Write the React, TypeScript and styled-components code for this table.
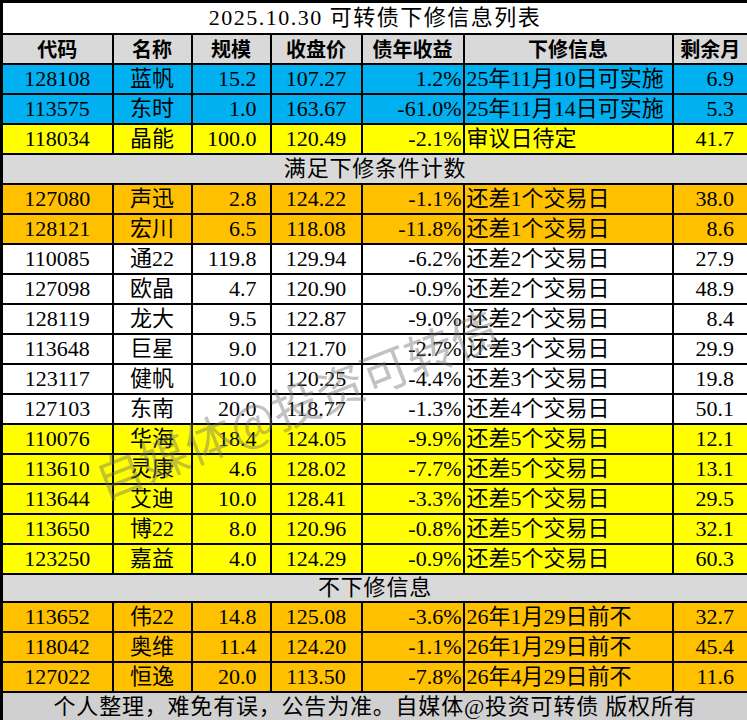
import React from 'react';
import styled, {createGlobalStyle} from 'styled-components';

type Tone = 'blue' | 'yellow' | 'orange' | 'white';

interface Bond {
  code: string;
  name: string;
  size: string;
  price: string;
  yld: string;
  info: string;
  months: string;
  tone: Tone;
}

const tones: Record<Tone, string> = {
  blue: '#00b0f0',
  yellow: '#ffff00',
  orange: '#ffc000',
  white: '#ffffff',
};

const topRows: Bond[] = [
  {code: '128108', name: '蓝帆', size: '15.2', price: '107.27', yld: '1.2%', info: '25年11月10日可实施', months: '6.9', tone: 'blue'},
  {code: '113575', name: '东时', size: '1.0', price: '163.67', yld: '-61.0%', info: '25年11月14日可实施', months: '5.3', tone: 'blue'},
  {code: '118034', name: '晶能', size: '100.0', price: '120.49', yld: '-2.1%', info: '审议日待定', months: '41.7', tone: 'yellow'},
];

const countRows: Bond[] = [
  {code: '127080', name: '声迅', size: '2.8', price: '124.22', yld: '-1.1%', info: '还差1个交易日', months: '38.0', tone: 'orange'},
  {code: '128121', name: '宏川', size: '6.5', price: '118.08', yld: '-11.8%', info: '还差1个交易日', months: '8.6', tone: 'orange'},
  {code: '110085', name: '通22', size: '119.8', price: '129.94', yld: '-6.2%', info: '还差2个交易日', months: '27.9', tone: 'white'},
  {code: '127098', name: '欧晶', size: '4.7', price: '120.90', yld: '-0.9%', info: '还差2个交易日', months: '48.9', tone: 'white'},
  {code: '128119', name: '龙大', size: '9.5', price: '122.87', yld: '-9.0%', info: '还差2个交易日', months: '8.4', tone: 'white'},
  {code: '113648', name: '巨星', size: '9.0', price: '121.70', yld: '-2.7%', info: '还差3个交易日', months: '29.9', tone: 'white'},
  {code: '123117', name: '健帆', size: '10.0', price: '120.25', yld: '-4.4%', info: '还差3个交易日', months: '19.8', tone: 'white'},
  {code: '127103', name: '东南', size: '20.0', price: '118.77', yld: '-1.3%', info: '还差4个交易日', months: '50.1', tone: 'white'},
  {code: '110076', name: '华海', size: '18.4', price: '124.05', yld: '-9.9%', info: '还差5个交易日', months: '12.1', tone: 'yellow'},
  {code: '113610', name: '灵康', size: '4.6', price: '128.02', yld: '-7.7%', info: '还差5个交易日', months: '13.1', tone: 'yellow'},
  {code: '113644', name: '艾迪', size: '10.0', price: '128.41', yld: '-3.3%', info: '还差5个交易日', months: '29.5', tone: 'yellow'},
  {code: '113650', name: '博22', size: '8.0', price: '120.96', yld: '-0.8%', info: '还差5个交易日', months: '32.1', tone: 'yellow'},
  {code: '123250', name: '嘉益', size: '4.0', price: '124.29', yld: '-0.9%', info: '还差5个交易日', months: '60.3', tone: 'yellow'},
];

const noRows: Bond[] = [
  {code: '113652', name: '伟22', size: '14.8', price: '125.08', yld: '-3.6%', info: '26年1月29日前不', months: '32.7', tone: 'orange'},
  {code: '118042', name: '奥维', size: '11.4', price: '124.20', yld: '-1.1%', info: '26年1月29日前不', months: '45.4', tone: 'orange'},
  {code: '127022', name: '恒逸', size: '20.0', price: '113.50', yld: '-7.8%', info: '26年4月29日前不', months: '11.6', tone: 'orange'},
];

const headers = ['代码', '名称', '规模', '收盘价', '债年收益', '下修信息', '剩余月'];
const colWidths = [111, 79, 79, 91, 102, 209, 76];

const GlobalStyle = createGlobalStyle`
  html, body {
    margin: 0;
    padding: 0;
    background: #fff;
  }
`;

const Sheet = styled.div`
  position: relative;
  width: 747px;
  height: 720px;
  overflow: hidden;
`;

const Table = styled.table`
  width: 747px;
  border-collapse: collapse;
  table-layout: fixed;
  border: 3px solid #000;
  font-family: 'Liberation Serif', 'Noto Sans CJK SC', serif;
  font-size: 22px;
  color: #000;
`;

const Row = styled.tr<{$h?: number}>`
  height: ${p => p.$h ?? 30}px;
`;

const Cell = styled.td<{$tone: Tone; $align?: 'left' | 'center' | 'right'}>`
  border: 2px solid #000;
  background: ${p => tones[p.$tone]};
  text-align: ${p => p.$align ?? 'center'};
  padding: 0 ${p => (p.$align === 'right' ? '13px' : '2px')} 0 2px;
  white-space: nowrap;
  overflow: hidden;
  line-height: 26px;
  vertical-align: middle;
`;

const TightCell = styled(Cell)`
  padding-right: 1px;
`;

const HeadCell = styled.th`
  border: 2px solid #000;
  background: #d9d9d9;
  font-family: 'Noto Sans CJK SC', sans-serif;
  font-weight: 700;
  font-size: 20px;
  line-height: 26px;
  padding: 0;
`;

const BannerCell = styled.td<{$bg: string}>`
  border: 2px solid #000;
  background: ${p => p.$bg};
  text-align: center;
  padding: 0;
  line-height: 26px;
  letter-spacing: 0.8px;
`;

const Title = styled(BannerCell)`
  letter-spacing: 1.5px;
`;

const Watermark = styled.div`
  position: absolute;
  left: 96px;
  top: 446px;
  transform: rotate(-21.5deg);
  transform-origin: left center;
  font-family: 'Noto Sans CJK SC', sans-serif;
  font-size: 48px;
  font-weight: 400;
  line-height: 70px;
  color: rgba(110, 110, 110, 0.42);
  white-space: nowrap;
  pointer-events: none;
`;

function BondRow({b}: {b: Bond}) {
  return (
    <Row>
      <Cell $tone={b.tone}>{b.code}</Cell>
      <Cell $tone={b.tone}>{b.name}</Cell>
      <Cell $tone={b.tone} $align="right">{b.size}</Cell>
      <Cell $tone={b.tone}>{b.price}</Cell>
      <TightCell $tone={b.tone} $align="right">{b.yld}</TightCell>
      <Cell $tone={b.tone} $align="left">{b.info}</Cell>
      <Cell $tone={b.tone} $align="right">{b.months}</Cell>
    </Row>
  );
}

export default function App(): JSX.Element {
  return (
    <>
      <GlobalStyle />
      <Sheet>
        <Table>
          <colgroup>
            {colWidths.map((w, i) => (
              <col key={i} style={{width: w}} />
            ))}
          </colgroup>
          <tbody>
            <Row $h={32}>
              <Title colSpan={7} $bg="#ffffff">2025.10.30 可转债下修信息列表</Title>
            </Row>
            <Row>
              {headers.map(h => (
                <HeadCell key={h}>{h}</HeadCell>
              ))}
            </Row>
            {topRows.map(b => (
              <BondRow key={b.code} b={b} />
            ))}
            <Row>
              <BannerCell colSpan={7} $bg="#d9d9d9">满足下修条件计数</BannerCell>
            </Row>
            {countRows.map(b => (
              <BondRow key={b.code} b={b} />
            ))}
            <Row $h={26}>
              <BannerCell colSpan={7} $bg="#d9d9d9">不下修信息</BannerCell>
            </Row>
            {noRows.map(b => (
              <BondRow key={b.code} b={b} />
            ))}
            <Row $h={31}>
              <BannerCell colSpan={7} $bg="#d0d0d0">个人整理，难免有误，公告为准。自媒体@投资可转债 版权所有</BannerCell>
            </Row>
          </tbody>
        </Table>
        <Watermark>自媒体@投资可转债</Watermark>
      </Sheet>
    </>
  );
}
